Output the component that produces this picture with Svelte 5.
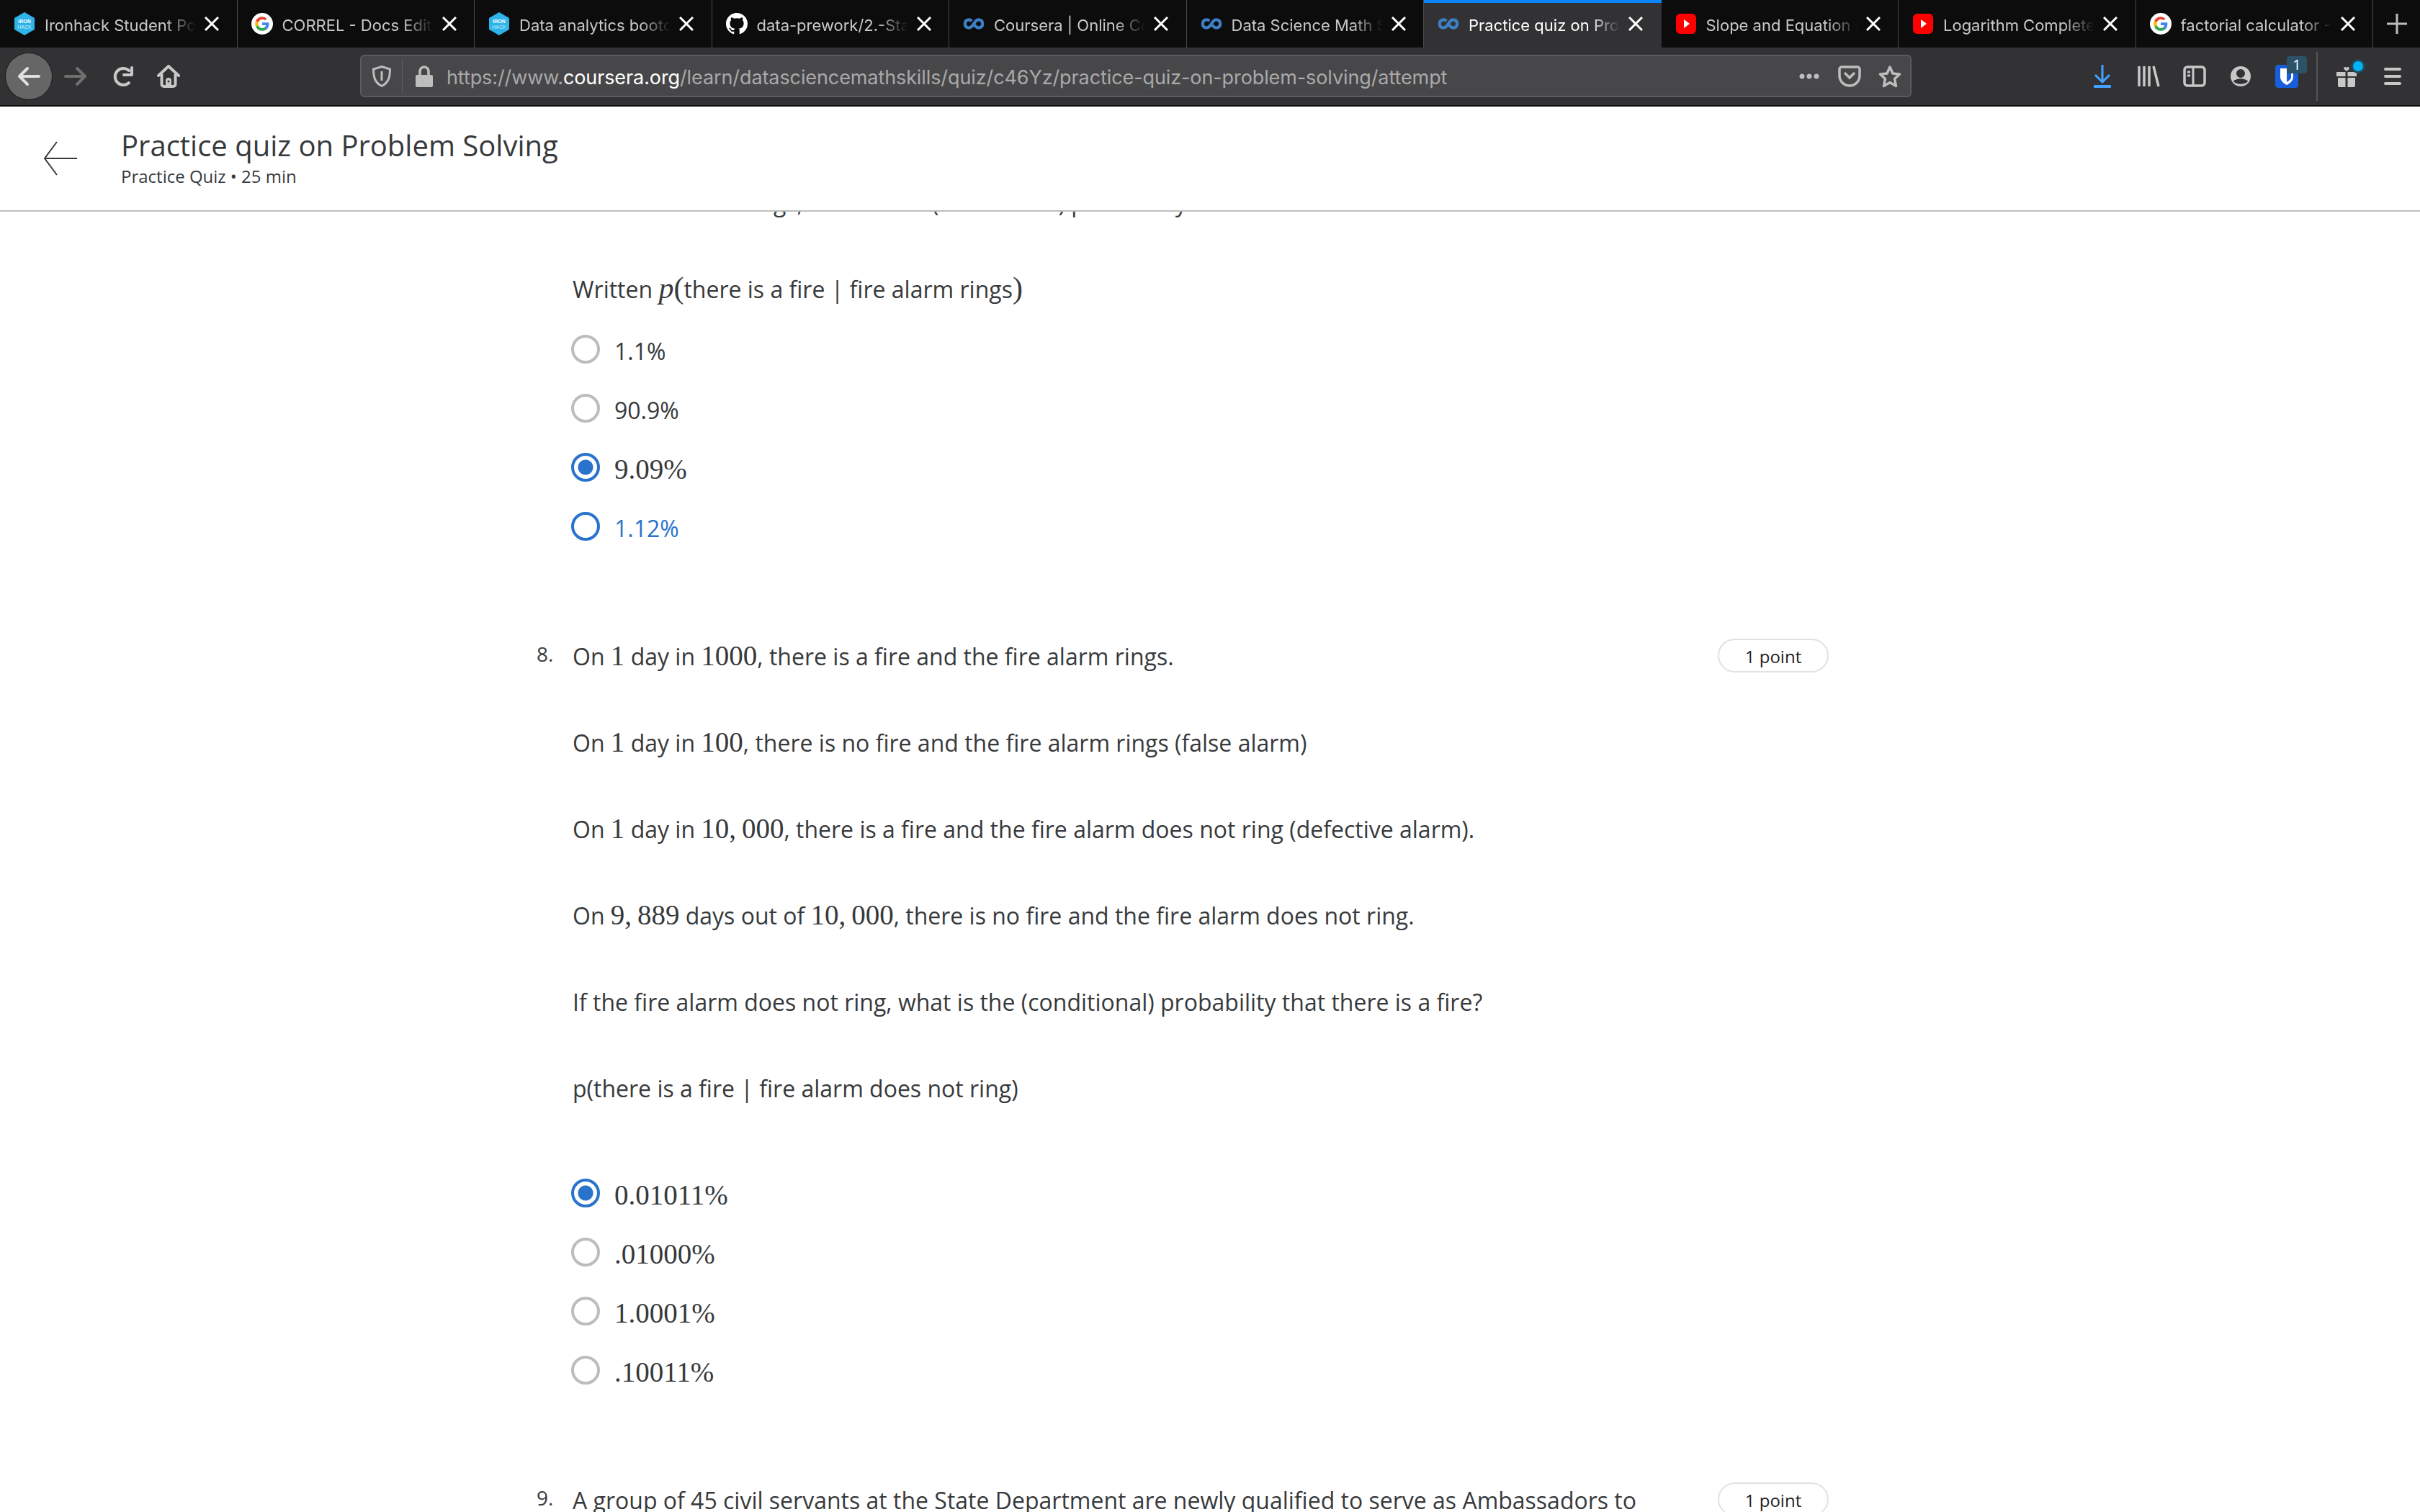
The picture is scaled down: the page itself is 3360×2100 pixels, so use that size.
<script>
  const tabs = [
    { title: "Ironhack Student Portal", icon: "iron" },
    { title: "CORREL - Docs Editors Help", icon: "google" },
    { title: "Data analytics bootcamp", icon: "iron" },
    { title: "data-prework/2.-Statistics", icon: "github" },
    { title: "Coursera | Online Courses", icon: "coursera" },
    { title: "Data Science Math Skills", icon: "coursera" },
    { title: "Practice quiz on Problem", icon: "coursera", active: true },
    { title: "Slope and Equation of a line", icon: "youtube" },
    { title: "Logarithm Complete Guide", icon: "youtube" },
    { title: "factorial calculator - Google", icon: "google" }
  ]

  const q7options = [
    { label: "1.1%" },
    { label: "90.9%" },
    { label: "9.09%", math: true, state: "checked" },
    { label: "1.12%", state: "hover" }
  ]

  const q8options = [
    { label: "0.01011%", math: true, state: "checked" },
    { label: ".01000%", math: true },
    { label: "1.0001%", math: true },
    { label: ".10011%", math: true }
  ]
</script>

{#snippet favicon(kind)}
  {#if kind === "iron"}
    <svg class="fav" viewBox="0 0 30 32">
      <path d="M15 1 28 8.500v15L15 31 2 23.500v-15z" fill="#2eb4e8" stroke="#2eb4e8" stroke-width="2" stroke-linejoin="round" />
      <text x="15" y="14.500" class="favtext">IRON</text>
      <text x="15" y="22.500" class="favtext light">HACK</text>
    </svg>
  {:else if kind === "google"}
    <svg class="fav" viewBox="0 0 32 32">
      <circle cx="16" cy="16" r="16" fill="#fff" />
      <path d="M26 16.300c0-.8-.1-1.500-.2-2.200H16v4.100h5.600a4.800 4.800 0 0 1-2.100 3.200v2.700h3.400c2-1.800 3.100-4.500 3.100-7.800z" fill="#4285f4" />
      <path d="M16 26.500c2.800 0 5.200-.9 6.900-2.500l-3.400-2.700c-.9.600-2.100 1-3.500 1-2.700 0-5-1.800-5.800-4.300H6.700v2.700a10.500 10.500 0 0 0 9.300 5.800z" fill="#34a853" />
      <path d="M10.200 18a6.300 6.300 0 0 1 0-4v-2.700H6.700a10.500 10.500 0 0 0 0 9.400z" fill="#fbbc05" />
      <path d="M16 9.700c1.500 0 2.900.5 4 1.600l3-3a10.100 10.100 0 0 0-7-2.800 10.500 10.500 0 0 0-9.300 5.800l3.500 2.700c.8-2.500 3.100-4.300 5.800-4.300z" fill="#ea4335" />
    </svg>
  {:else if kind === "github"}
    <svg class="fav" viewBox="0 0 16 16">
      <path fill="#fff" d="M8 0C3.580 0 0 3.580 0 8c0 3.540 2.290 6.530 5.470 7.590.4.070.55-.17.55-.38 0-.19-.01-.82-.01-1.490-2.010.37-2.530-.49-2.690-.94-.09-.23-.48-.94-.82-1.130-.28-.15-.68-.52-.01-.53.63-.01 1.080.58 1.230.82.720 1.210 1.870.87 2.330.66.070-.52.280-.87.510-1.070-1.780-.2-3.640-.89-3.640-3.950 0-.87.310-1.590.820-2.150-.08-.2-.36-1.020.08-2.120 0 0 .67-.21 2.200.82.640-.18 1.320-.27 2-.27s1.360.09 2 .27c1.530-1.040 2.200-.82 2.200-.82.440 1.100.16 1.920.08 2.120.51.560.82 1.270.82 2.150 0 3.070-1.870 3.750-3.650 3.950.29.250.54.730.54 1.480 0 1.070-.01 1.930-.01 2.200 0 .21.150.46.550.38A8.010 8.010 0 0 0 16 8c0-4.420-3.580-8-8-8z" />
    </svg>
  {:else if kind === "coursera"}
    <svg class="fav" viewBox="0 0 32 32">
      <path d="M13 12C9.500 8.500 3 10 3 16s6.500 7.500 10 4l6-8c3.500-3.500 10-2 10 4s-6.500 7.500-10 4l-3-3" fill="none" stroke="#3d7fc4" stroke-width="4.500" />
    </svg>
  {:else}
    <svg class="fav" viewBox="0 0 30 32">
      <rect x="1" y="2" width="28" height="28" rx="6" fill="#f00" />
      <path d="M12 10l8 6-8 6z" fill="#fff" />
    </svg>
  {/if}
{/snippet}

{#snippet option(opt)}
  <div class={`option ${opt.state || ""}`}>
    <span class="radio"></span>
    <span class={`optlabel ${opt.math ? "m" : ""}`}>{opt.label}</span>
  </div>
{/snippet}

<div class="screen">
  <div class="tabstrip">
    {#each tabs as tab}
      <div class={`tab ${tab.active ? "active" : ""}`}>
        {@render favicon(tab.icon)}
        <span class="tabtitle">{tab.title}</span>
        <svg class="close" viewBox="0 0 20 20">
          <path d="M1 1l18 18M19 1L1 19" stroke="#fff" stroke-width="3" />
        </svg>
      </div>
    {/each}
    <svg class="newtab" viewBox="0 0 28 28">
      <path d="M14 0v28M0 14h28" stroke="#bdbdbe" stroke-width="3" />
    </svg>
  </div>

  <div class="toolbar">
    <div class="btn backbtn">
      <svg viewBox="0 0 32 28" width="32" height="28">
        <path d="M30 14H3M14 3 3 14l11 11" fill="none" stroke="#e0e0e0" stroke-width="4" stroke-linecap="round" stroke-linejoin="round" />
      </svg>
    </div>
    <div class="btn">
      <svg viewBox="0 0 32 28" width="32" height="28">
        <path d="M2 14h27M18 3l11 11-11 11" fill="none" stroke="#707071" stroke-width="4" stroke-linecap="round" stroke-linejoin="round" />
      </svg>
    </div>
    <div class="btn">
      <svg class="reload" viewBox="0 0 32 32" width="32" height="32">
        <path d="M24 8A11.500 11.500 0 1 0 24 25" fill="none" stroke="#c8c8c9" stroke-width="4" stroke-linecap="round" />
        <path d="M28 4v10H17" fill="none" stroke="#c8c8c9" stroke-width="4" stroke-linecap="round" stroke-linejoin="round" />
      </svg>
    </div>
    <div class="btn">
      <svg viewBox="0 0 32 32" width="32" height="32">
        <path d="M2 15 16 2l14 13" fill="none" stroke="#c8c8c9" stroke-width="4" stroke-linecap="round" stroke-linejoin="round" />
        <path d="M6.500 13v14a3 3 0 0 0 3 3h13a3 3 0 0 0 3-3V13" fill="none" stroke="#c8c8c9" stroke-width="4" />
        <path d="M12 30v-8a4 4 0 0 1 8 0v8z" fill="#c8c8c9" />
        <circle cx="16" cy="23" r="1.500" fill="#323234" />
      </svg>
    </div>

    <div class="urlbar">
      <svg class="shield" viewBox="0 0 26 30" width="26" height="30">
        <path d="M13 1.500 24.500 5c0 11-2 19-11.500 23.500C3.500 24 1.500 16 1.500 5z" fill="none" stroke="#bdbdbe" stroke-width="3" />
        <path d="M13 8v13" stroke="#bdbdbe" stroke-width="3" />
      </svg>
      <span class="urldiv"></span>
      <svg class="lock" viewBox="0 0 24 30" width="24" height="30">
        <path d="M6 14V8a6 6 0 0 1 12 0v6" fill="none" stroke="#bdbdbe" stroke-width="3.500" />
        <rect y="13" width="24" height="17" rx="2" fill="#bdbdbe" />
      </svg>
      <span class="url">https://www.<b>coursera.org</b>/learn/datasciencemathskills/quiz/c46Yz/practice-quiz-on-problem-solving/attempt</span>
      <svg class="dots" viewBox="0 0 28 8" width="28" height="8">
        <circle cx="4" cy="4" r="3.500" fill="#bdbdbe" />
        <circle cx="14" cy="4" r="3.500" fill="#bdbdbe" />
        <circle cx="24" cy="4" r="3.500" fill="#bdbdbe" />
      </svg>
      <svg class="pocket" viewBox="0 0 32 30" width="32" height="30">
        <path d="M2 5a3 3 0 0 1 3-3h22a3 3 0 0 1 3 3v9a14 14 0 0 1-28 0z" fill="none" stroke="#bdbdbe" stroke-width="3.500" />
        <path d="M10 11l6 6 6-6" fill="none" stroke="#bdbdbe" stroke-width="3.500" stroke-linecap="round" />
      </svg>
      <svg class="star" viewBox="0 0 32 32" width="32" height="32">
        <path d="M16 3l4 9 9.500 1-7 6.500 2 10L16 24.500 7.500 29.500l2-10-7-6.500 9.500-1z" fill="none" stroke="#bdbdbe" stroke-width="3.500" stroke-linejoin="round" />
      </svg>
    </div>

    <div class="tools">
      <div class="btn">
        <svg viewBox="0 0 26 32" width="26" height="32">
          <path d="M13 0v24M3 14l10 10 10-10" fill="none" stroke="#45a1ff" stroke-width="3" />
          <rect x="1" y="28" width="24" height="4" rx="1" fill="#45a1ff" />
        </svg>
      </div>
      <div class="btn">
        <svg viewBox="0 0 32 30" width="32" height="30">
          <path d="M3 1v28M10 1v28M17 1v28M23 1l7 28" fill="none" stroke="#c8c8c9" stroke-width="3.500" />
        </svg>
      </div>
      <div class="btn">
        <svg viewBox="0 0 32 30" width="32" height="30">
          <rect x="2" y="2" width="28" height="26" rx="4" fill="none" stroke="#c8c8c9" stroke-width="3.500" />
          <path d="M14 2v26M6 9h4M6 14h4" stroke="#c8c8c9" stroke-width="3" />
        </svg>
      </div>
      <div class="btn">
        <svg viewBox="0 0 30 30" width="30" height="30">
          <circle cx="15" cy="15" r="14" fill="#c8c8c9" />
          <circle cx="15" cy="11" r="6" fill="#323234" />
          <path d="M5 22c4 5 16 5 20 0-4-5-16-5-20 0z" fill="#323234" />
        </svg>
      </div>
      <div class="btn">
        <svg viewBox="0 0 32 32" width="32" height="32">
          <rect width="32" height="32" rx="4" fill="#175ddc" />
          <path d="M7 5h18v12c0 5-5 9-9 11-4-2-9-6-9-11z" fill="#fff" />
          <path d="M16 8h6v9c0 3-3 5-6 7z" fill="#175ddc" />
        </svg>
        <span class="badge">1</span>
      </div>
      <span class="toolsep"></span>
      <div class="btn">
        <svg viewBox="0 0 28 30" width="28" height="30">
          <path d="M14 3.500c-1.500-3-5-1-3.500 1.500L14 8l3.500-3c1.500-2.500-2-4.500-3.500-1.500z" fill="#c8c8c9" />
          <path d="M0 9h12.500v6H0zM15.500 9H28v6H15.500zM2 17h10.500v13H4a2 2 0 0 1-2-2zM15.500 17H26v11a2 2 0 0 1-2 2h-8.500z" fill="#c8c8c9" />
        </svg>
        <span class="giftdot"></span>
      </div>
      <div class="btn">
        <svg viewBox="0 0 24 24" width="24" height="24">
          <rect y="0" width="24" height="4" rx="2" fill="#c8c8c9" />
          <rect y="10" width="24" height="4" rx="2" fill="#c8c8c9" />
          <rect y="20" width="24" height="4" rx="2" fill="#c8c8c9" />
        </svg>
      </div>
    </div>
  </div>

  <header class="pagehead">
    <svg class="headback" viewBox="0 0 48 48" width="48" height="48">
      <path d="M47 24H2M19 1 2 24l17 23" fill="none" stroke="#373a3c" stroke-width="2" />
    </svg>
    <div>
      <h1>Practice quiz on Problem Solving</h1>
      <p class="meta">Practice Quiz • 25 min</p>
    </div>
  </header>

  <main>
    <div class="quiz">
      <section class="question q7">
        <div class="qnum"></div>
        <div class="qbody">
          <p>If the fire alarm rings, what is the (conditional) probability that there is a fire?</p>
          <p>Written <i class="m big">p</i><span class="m big">(</span>there is a fire | fire alarm rings<span class="m big">)</span></p>
          <div class="options">
            {#each q7options as opt}
              {@render option(opt)}
            {/each}
          </div>
        </div>
      </section>

      <section class="question q8">
        <div class="qnum">8.</div>
        <div class="qbody">
          <p>On <span class="m">1</span> day in <span class="m">1000</span>, there is a fire and the fire alarm rings.</p>
          <p>On <span class="m">1</span> day in <span class="m">100</span>, there is no fire and the fire alarm rings (false alarm)</p>
          <p>On <span class="m">1</span> day in <span class="m">10,&#8201;000</span>, there is a fire and the fire alarm does not ring (defective alarm).</p>
          <p>On <span class="m">9,&#8201;889</span> days out of <span class="m">10,&#8201;000</span>, there is no fire and the fire alarm does not ring.</p>
          <p>If the fire alarm does not ring, what is the (conditional) probability that there is a fire?</p>
          <p>p(there is a fire | fire alarm does not ring)</p>
          <div class="options">
            {#each q8options as opt}
              {@render option(opt)}
            {/each}
          </div>
        </div>
        <span class="pill">1 point</span>
      </section>

      <section class="question q9">
        <div class="qnum">9.</div>
        <div class="qbody">
          <p>A group of 45 civil servants at the State Department are newly qualified to serve as Ambassadors to</p>
        </div>
        <span class="pill">1 point</span>
      </section>
    </div>
  </main>
</div>

<style>
  :global(body) {
    margin: 0;
    background: #fff;
  }
  .screen {
    width: 3360px;
    height: 2100px;
    overflow: hidden;
    display: flex;
    flex-direction: column;
    font-family: "Open Sans", sans-serif;
    color: #373a3c;
  }

  /* browser chrome */
  .tabstrip {
    height: 66px;
    flex: none;
    display: flex;
    align-items: stretch;
    background: #0c0c0d;
    font-family: Inter, sans-serif;
  }
  .tab {
    flex: 0 0 329.5px;
    box-sizing: border-box;
    display: flex;
    align-items: center;
    padding-left: 19px;
    border-right: 1px solid #4a4a4b;
    color: #c9c9ca;
    font-size: 22px;
  }
  .tab.active {
    background: #323234;
    border-top: 4px solid #0a84ff;
    border-right: none;
    color: #fff;
    padding-bottom: 4px;
  }
  .fav {
    width: 30px;
    height: 32px;
    flex: none;
    margin-right: 13px;
  }
  .favtext {
    font-size: 7px;
    font-weight: 700;
    fill: #fff;
    text-anchor: middle;
    font-family: "Liberation Sans", sans-serif;
  }
  .favtext.light {
    font-weight: 400;
    fill: #cdeefa;
  }
  .tabtitle {
    width: 210px;
    flex: none;
    padding-top: 3px;
    overflow: hidden;
    white-space: nowrap;
    -webkit-mask-image: linear-gradient(to right, #000 80%, transparent);
    mask-image: linear-gradient(to right, #000 80%, transparent);
  }
  .close {
    width: 20px;
    height: 20px;
    flex: none;
    margin-left: 12px;
  }
  .newtab {
    width: 28px;
    height: 28px;
    margin: 19px 0 0 19px;
  }
  .toolbar {
    height: 80px;
    flex: none;
    box-sizing: content-box;
    display: flex;
    align-items: center;
    padding-left: 8px;
    background: #323234;
    border-bottom: 2px solid #0c0c0d;
  }
  .btn {
    width: 64.5px;
    height: 64px;
    flex: none;
    display: flex;
    align-items: center;
    justify-content: center;
    position: relative;
  }
  .backbtn {
    width: 64px;
    margin-right: 0.5px;
    background: #666667;
    border-radius: 50%;
    box-shadow: 0 0 0 1px #1e1e1e;
  }
  .reload {
    margin-left: 3px;
  }
  .urlbar {
    margin-left: 234px;
    width: 2154px;
    height: 59px;
    box-sizing: border-box;
    display: flex;
    align-items: center;
    background: #474749;
    border: 2px solid #5c5c5e;
    border-radius: 6px;
    margin-top: -1px;
    font-family: Inter, sans-serif;
  }
  .shield {
    margin-left: 15px;
  }
  .urldiv {
    width: 1px;
    height: 46px;
    margin: 0 18px 0 15px;
    background: #626264;
  }
  .url {
    margin-left: 19px;
    padding-top: 3px;
    color: #a9a9aa;
    font-size: 27px;
    letter-spacing: -0.1px;
    white-space: nowrap;
    flex: 1;
  }
  .url b {
    color: #fff;
    font-weight: 400;
  }
  .pocket {
    margin-left: 26px;
  }
  .star {
    margin: 0 12px 0 24px;
  }
  .tools {
    margin-left: auto;
    display: flex;
    align-items: center;
    padding-right: 6px;
  }
  .tools .btn {
    width: 64px;
  }
  .toolsep {
    width: 2px;
    height: 68px;
    margin: 0 8px 0 9px;
    background: #555557;
  }
  .badge {
    position: absolute;
    top: 4px;
    left: 32px;
    width: 28px;
    height: 24px;
    border-radius: 4px;
    background: #2b5267;
    color: #fff;
    font-size: 20px;
    line-height: 24px;
    text-align: center;
  }
  .giftdot {
    position: absolute;
    top: 11px;
    left: 41px;
    width: 14px;
    height: 14px;
    border-radius: 50%;
    background: #00b3f4;
    box-shadow: 0 0 0 3px #1f4a5c;
  }

  /* page header */
  .pagehead {
    height: 144px;
    flex: none;
    box-sizing: content-box;
    display: flex;
    align-items: center;
    background: #fff;
    border-bottom: 2px solid #bdbdbd;
  }
  .headback {
    margin: 0 60px 0 60px;
    flex: none;
  }
  h1 {
    margin: 0;
    font-size: 40px;
    font-weight: 400;
    line-height: 54px;
  }
  .meta {
    margin: -2px 0 0;
    padding-bottom: 2px;
    font-size: 24px;
    line-height: 36px;
  }

  /* quiz */
  main {
    flex: 1;
    overflow: hidden;
  }
  .quiz {
    margin-top: -36px;
    padding-left: 745px;
    font-size: 32px;
  }
  .question {
    display: flex;
    align-items: flex-start;
  }
  .qnum {
    width: 50px;
    flex: none;
    font-size: 28px;
    line-height: 40px;
  }
  .qbody {
    width: 1590px;
    flex: none;
  }
  .qbody p {
    margin: 0 0 72px;
    line-height: 48px;
    white-space: nowrap;
  }
  .options {
    margin-top: -54px;
  }
  .q8 .options {
    margin-top: 80px;
  }
  .q8 {
    margin-top: 116px;
  }
  .q9 {
    margin-top: 116px;
  }
  .m {
    font-family: "Liberation Serif", serif;
    font-size: 39px;
    line-height: 1;
  }
  .m.big {
    font-size: 42px;
  }
  .option {
    height: 82px;
    display: flex;
    align-items: center;
    gap: 20px;
  }
  .optlabel {
    padding-top: 4px;
  }
  .radio {
    width: 40px;
    height: 40px;
    margin-left: -2px;
    box-sizing: border-box;
    flex: none;
    border: 4px solid #bdbdbd;
    border-radius: 50%;
  }
  .option.hover {
    color: #2a73cc;
  }
  .option.hover .radio {
    border-color: #2a73cc;
  }
  .option.checked .radio {
    border-color: #2a73cc;
    background: radial-gradient(circle, #2a73cc 0 10px, #fff 11px);
  }
  .pill {
    box-sizing: border-box;
    width: 154px;
    height: 47px;
    margin-top: -1px;
    flex: none;
    border: 2px solid #e1e1e1;
    border-radius: 24px;
    color: #1f1f1f;
    font-size: 24px;
    line-height: 46px;
    text-align: center;
  }
</style>
